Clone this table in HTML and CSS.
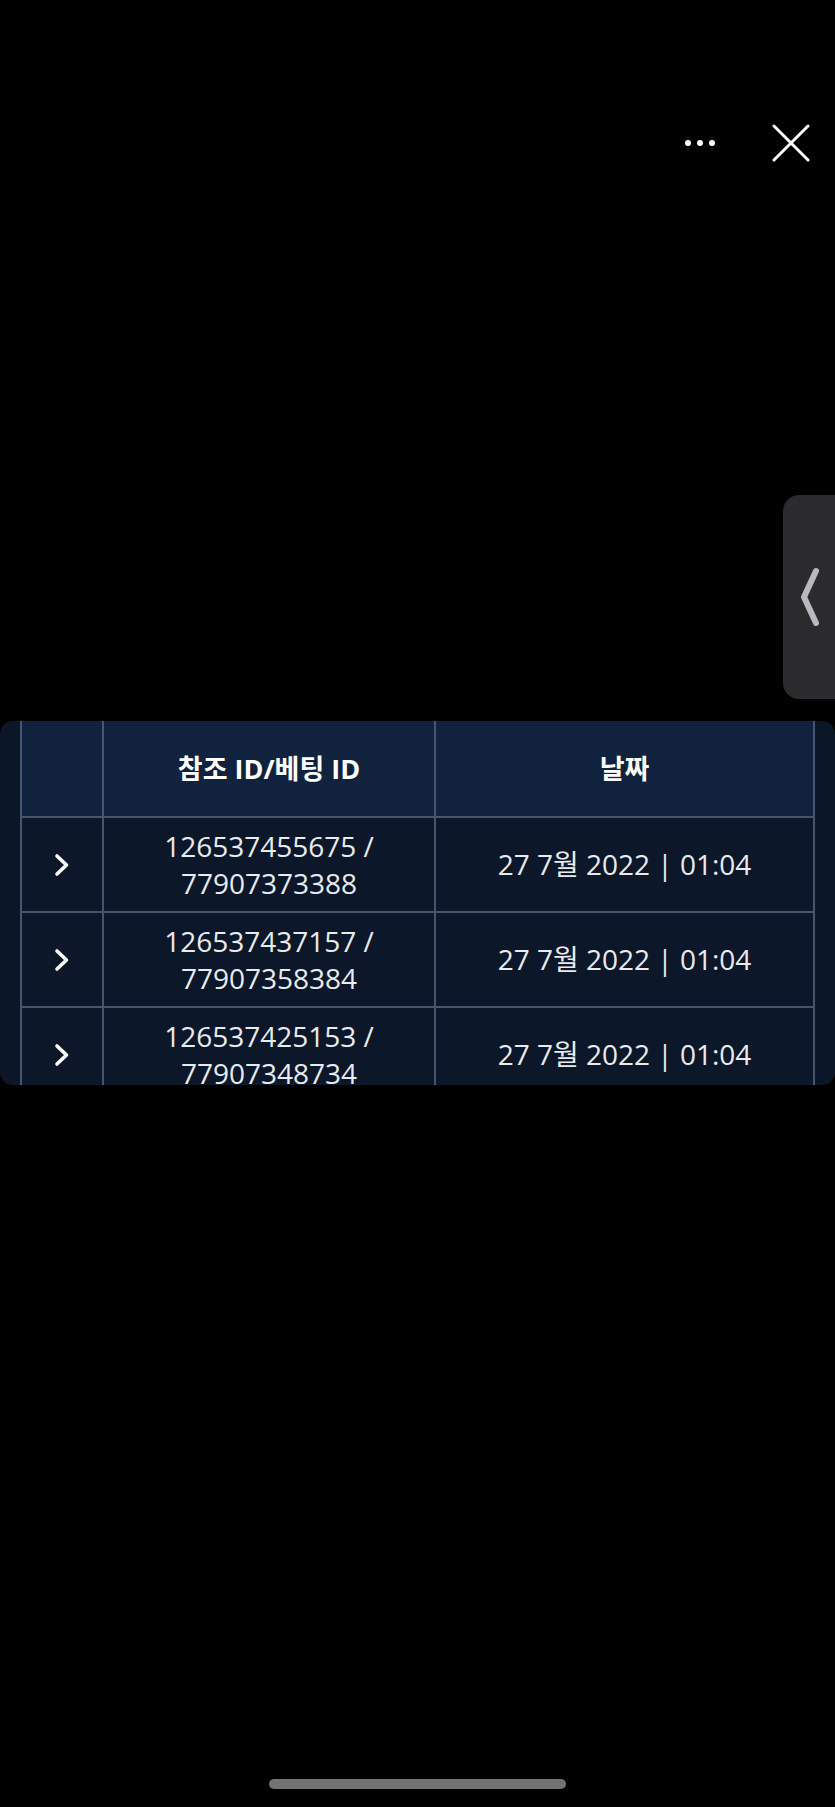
FILE: index.html
```html
<!DOCTYPE html>
<html lang="ko">
<head>
<meta charset="utf-8">
<link rel="stylesheet" href="styles.css">
</head>
<body>
<div class="screen">
  <div class="topbar">
    <div class="dots"><span></span><span></span><span></span></div>
    <svg class="close" width="38" height="38" viewBox="0 0 38 38"><path d="M2 2 L36 36 M36 2 L2 36" stroke="#fff" stroke-width="3" stroke-linecap="round" fill="none"/></svg>
  </div>

  <div class="sidetab">
    <svg width="22" height="62" viewBox="0 0 22 62"><path d="M16 5 L4 31 L16 57" stroke="#b9b9c1" stroke-width="6" stroke-linecap="round" stroke-linejoin="round" fill="none"/></svg>
  </div>

  <div class="tablewrap">
    <div class="grid">
      <div class="cell head"></div>
      <div class="cell head">참조 ID/베팅 ID</div>
      <div class="cell head">날짜</div>

      <div class="cell"><svg class="chev" width="16" height="24" viewBox="0 0 16 24"><path d="M3 3 L12.5 12 L3 21" stroke="#fff" stroke-width="3.6" stroke-linecap="round" stroke-linejoin="round" fill="none"/></svg></div>
      <div class="cell">126537455675 /<br>77907373388</div>
      <div class="cell">27 7월 2022 | 01:04</div>

      <div class="cell"><svg class="chev" width="16" height="24" viewBox="0 0 16 24"><path d="M3 3 L12.5 12 L3 21" stroke="#fff" stroke-width="3.6" stroke-linecap="round" stroke-linejoin="round" fill="none"/></svg></div>
      <div class="cell">126537437157 /<br>77907358384</div>
      <div class="cell">27 7월 2022 | 01:04</div>

      <div class="cell"><svg class="chev" width="16" height="24" viewBox="0 0 16 24"><path d="M3 3 L12.5 12 L3 21" stroke="#fff" stroke-width="3.6" stroke-linecap="round" stroke-linejoin="round" fill="none"/></svg></div>
      <div class="cell">126537425153 /<br>77907348734</div>
      <div class="cell">27 7월 2022 | 01:04</div>
    </div>
  </div>

  <div class="home"></div>
</div>
</body>
</html>
```

FILE: styles.css
```css
html, body {
  margin: 0;
  padding: 0;
  background: #000;
}
.screen {
  position: relative;
  width: 835px;
  height: 1807px;
  display: flex;
  flex-direction: column;
  overflow: hidden;
  font-family: "Open Sans", "Noto Sans CJK KR", sans-serif;
}
.topbar {
  display: flex;
  justify-content: flex-end;
  align-items: center;
  padding: 124px 25px 0 0;
  gap: 57px;
}
.dots {
  display: flex;
  gap: 6px;
}
.dots span {
  width: 6px;
  height: 6px;
  border-radius: 50%;
  background: #fff;
}
.close {
  display: block;
}
.sidetab {
  position: absolute;
  left: 783px;
  top: 495px;
  width: 60px;
  height: 204px;
  background: #2b2b2d;
  border-radius: 16px 0 0 16px;
  display: flex;
  align-items: center;
  padding-left: 17px;
  box-sizing: border-box;
}
.sidetab svg {
  display: block;
}
.tablewrap {
  margin-top: 559px;
  width: 835px;
  height: 364px;
  border-radius: 13px;
  overflow: hidden;
  background: #0b1628;
  padding-left: 20px;
  box-sizing: border-box;
}
.grid {
  display: grid;
  grid-template-columns: 80px 330px 377px;
  grid-template-rows: 95px 93px 93px 93px;
  column-gap: 2px;
  row-gap: 2px;
  width: max-content;
  background: #45566e;
  border-left: 2px solid #45566e;
  border-right: 2px solid #45566e;
}
.cell {
  background: #0c1729;
  color: #e9ebef;
  font-size: 28px;
  line-height: 37px;
  display: flex;
  align-items: center;
  justify-content: center;
  text-align: center;
}
.cell.head {
  background: #10223e;
  color: #fff;
  font-weight: 700;
  font-size: 27px;
}
.chev {
  display: block;
}
.home {
  margin-top: auto;
  margin-bottom: 18px;
  align-self: center;
  width: 297px;
  height: 10px;
  border-radius: 5px;
  background: #737373;
}
```
